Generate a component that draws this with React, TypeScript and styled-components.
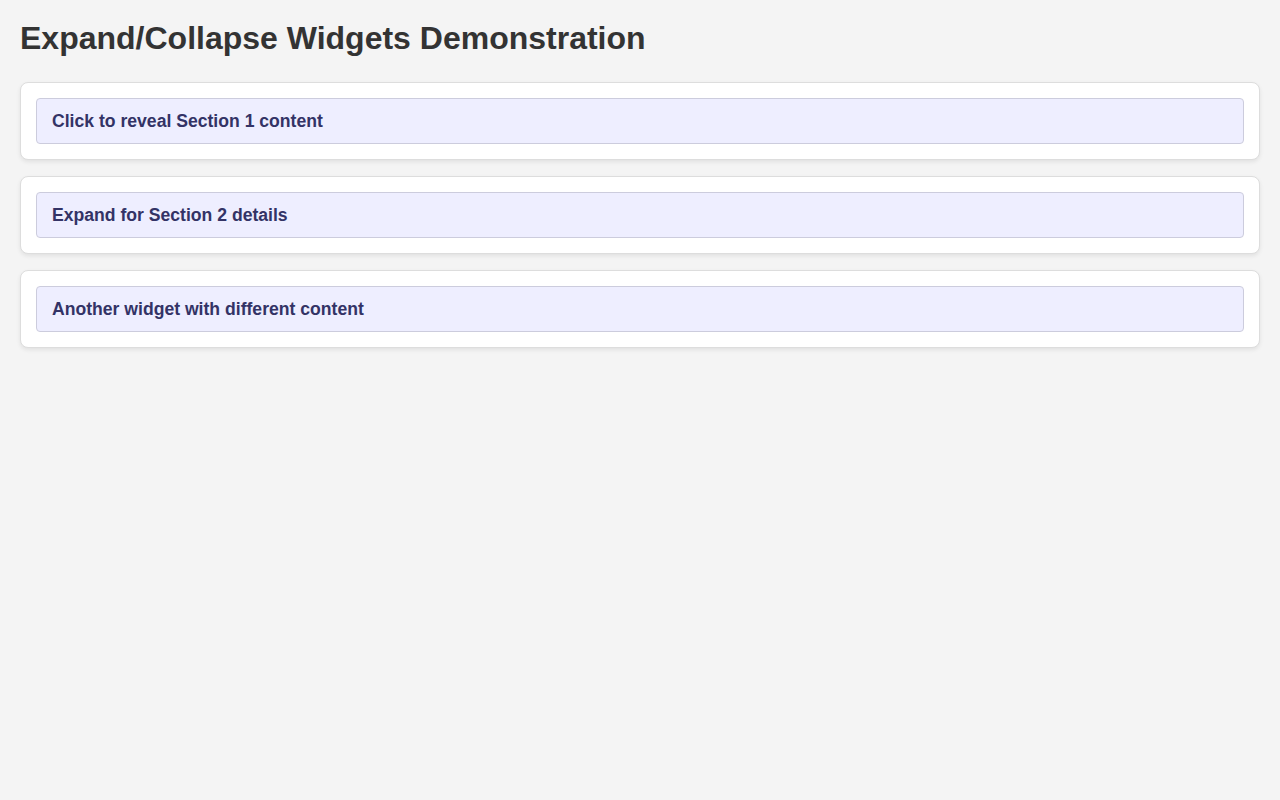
import React from 'react';
import styled, { createGlobalStyle } from 'styled-components';

const GlobalStyle = createGlobalStyle`
  html, body {
    margin: 0;
    background: #f4f4f4;
  }
  body {
    padding: 20px;
    font-family: "Liberation Sans", Arial, sans-serif;
    color: #333;
  }
`;

const Title = styled.h1`
  margin: 0 0 25px;
  font-size: 32px;
  line-height: 37px;
  font-weight: 700;
  color: #333;
`;

const Widget = styled.details`
  background: #fff;
  border: 1px solid #ddd;
  border-radius: 8px;
  padding: 15px;
  margin-bottom: 16px;
  box-shadow: 0 2px 4px rgba(0, 0, 0, 0.08);
`;

const Summary = styled.summary`
  display: block;
  list-style: none;
  cursor: pointer;
  padding: 12px 15px;
  background: #eeeeff;
  border: 1px solid #ccccdd;
  border-radius: 4px;
  font-size: 17.6px;
  line-height: 20px;
  font-weight: 700;
  color: #333366;

  &::-webkit-details-marker {
    display: none;
  }
`;

const Body = styled.div`
  padding: 12px 15px 0;
  font-size: 16px;
  color: #444;
`;

const widgets = [
  { title: 'Click to reveal Section 1 content', body: 'Here is the hidden content for Section 1.' },
  { title: 'Expand for Section 2 details', body: 'Section 2 details are shown here.' },
  { title: 'Another widget with different content', body: 'Different content lives inside this widget.' },
];

export default function App() {
  return (
    <>
      <GlobalStyle />
      <Title>Expand/Collapse Widgets Demonstration</Title>
      {widgets.map((w) => (
        <Widget key={w.title}>
          <Summary>{w.title}</Summary>
          <Body>{w.body}</Body>
        </Widget>
      ))}
    </>
  );
}
